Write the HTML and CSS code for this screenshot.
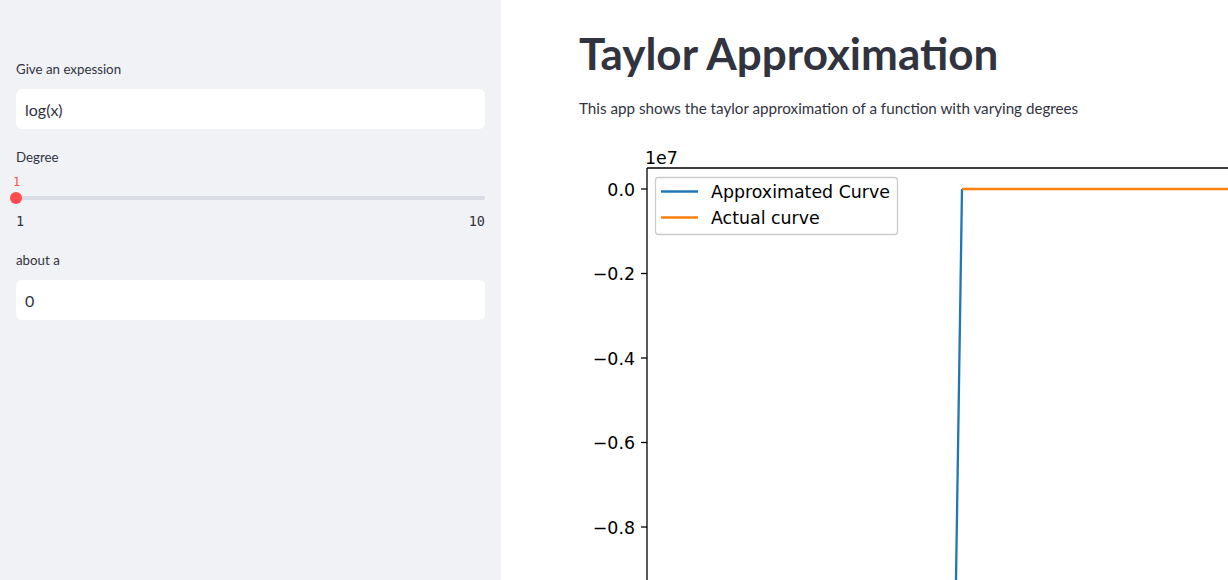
FILE: index.html
```html
<!DOCTYPE html>
<html>
<head>
<meta charset="utf-8">
<link rel="stylesheet" href="styles.css">
</head>
<body>
<div class="app">
  <aside class="sidebar">
    <div class="label">Give an expession</div>
    <div class="input">log(x)</div>
    <div class="label gap">Degree</div>
    <div class="slider">
      <div class="slider-value">1</div>
      <div class="track"><span class="thumb"></span></div>
      <div class="ticks"><span>1</span><span>10</span></div>
    </div>
    <div class="label gap2">about a</div>
    <div class="input">0</div>
  </aside>
  <main class="main">
    <h1 class="title">Taylor Approximation</h1>
    <p class="desc">This app shows the taylor approximation of a function with varying degrees</p>
    <svg class="chart" width="649" height="440" viewBox="0 0 649 440">
      <g font-family="DejaVu Sans, sans-serif" font-size="17.4" fill="#000">
        <line x1="68" y1="28" x2="649" y2="28" stroke="#000" stroke-width="1.3"/>
        <line x1="68" y1="28" x2="68" y2="440" stroke="#000" stroke-width="1.3"/>
        <text x="66" y="24">1e7</text>
        <g stroke="#000" stroke-width="1.3">
          <line x1="62" y1="49" x2="68" y2="49"/>
          <line x1="62" y1="133.5" x2="68" y2="133.5"/>
          <line x1="62" y1="218" x2="68" y2="218"/>
          <line x1="62" y1="302.5" x2="68" y2="302.5"/>
          <line x1="62" y1="387" x2="68" y2="387"/>
        </g>
        <g text-anchor="end">
          <text x="56" y="55.5">0.0</text>
          <text x="56" y="140">−0.2</text>
          <text x="56" y="224.5">−0.4</text>
          <text x="56" y="309">−0.6</text>
          <text x="56" y="393.5">−0.8</text>
        </g>
        <line x1="383" y1="49" x2="377" y2="440" stroke="#1f77b4" stroke-width="2.3"/>
        <line x1="383" y1="49" x2="649" y2="49" stroke="#ff7f0e" stroke-width="2.3"/>
        <rect x="76.5" y="37.5" width="242" height="57" rx="3" fill="#fff" fill-opacity="0.8" stroke="#cccccc" stroke-width="1.3"/>
        <line x1="82" y1="51.5" x2="119" y2="51.5" stroke="#1f77b4" stroke-width="2.3"/>
        <line x1="82" y1="77.5" x2="119" y2="77.5" stroke="#ff7f0e" stroke-width="2.3"/>
        <text x="132" y="58">Approximated Curve</text>
        <text x="132" y="84">Actual curve</text>
      </g>
    </svg>
  </main>
</div>
</body>
</html>
```
FILE: styles.css
```css
html, body {
  margin: 0;
  padding: 0;
  height: 100%;
  overflow: hidden;
}
body {
  font-family: Lato, "Noto Sans", sans-serif;
  color: #31333f;
  background: #fff;
}
.app {
  display: flex;
  height: 580px;
}
.sidebar {
  width: 469px;
  flex: none;
  background: #f0f2f6;
  padding: 59px 16px 0 16px;
  display: flex;
  flex-direction: column;
}
.label {
  font-size: 13.3px;
  line-height: 20px;
  height: 20px;
  margin-bottom: 10px;
}
.label.gap {
  margin-top: 18px;
  margin-bottom: 7px;
}
.label.gap2 {
  margin-top: 19px;
}
.input {
  height: 40px;
  background: #fff;
  border-radius: 6px;
  padding: 0 9px;
  display: flex;
  align-items: center;
  font-size: 16px;
}
.slider {
  display: flex;
  flex-direction: column;
}
.slider-value {
  font-family: "DejaVu Sans Mono", monospace;
  font-size: 12px;
  line-height: 14px;
  height: 14px;
  margin-top: 1px;
  color: #ff4b4b;
  margin-left: -3px;
}
.track {
  position: relative;
  height: 4px;
  margin-top: 7px;
  background: #d9dce4;
  border-radius: 2px;
}
.thumb {
  position: absolute;
  left: -6px;
  top: -4px;
  width: 12px;
  height: 12px;
  border-radius: 50%;
  background: #ff4b4b;
}
.ticks {
  display: flex;
  justify-content: space-between;
  font-family: "DejaVu Sans Mono", monospace;
  font-size: 13.5px;
  line-height: 20px;
  margin-top: 11px;
}
.main {
  flex: 1;
  padding: 27px 0 0 78px;
  overflow: hidden;
}
.title {
  margin: 0;
  font-size: 44px;
  line-height: 53px;
  font-weight: 700;
  white-space: nowrap;
}
.desc {
  margin: 16px 0 0 0;
  font-size: 15.2px;
  line-height: 24px;
  white-space: nowrap;
}
.chart {
  display: block;
  margin-top: 20px;
}
```
